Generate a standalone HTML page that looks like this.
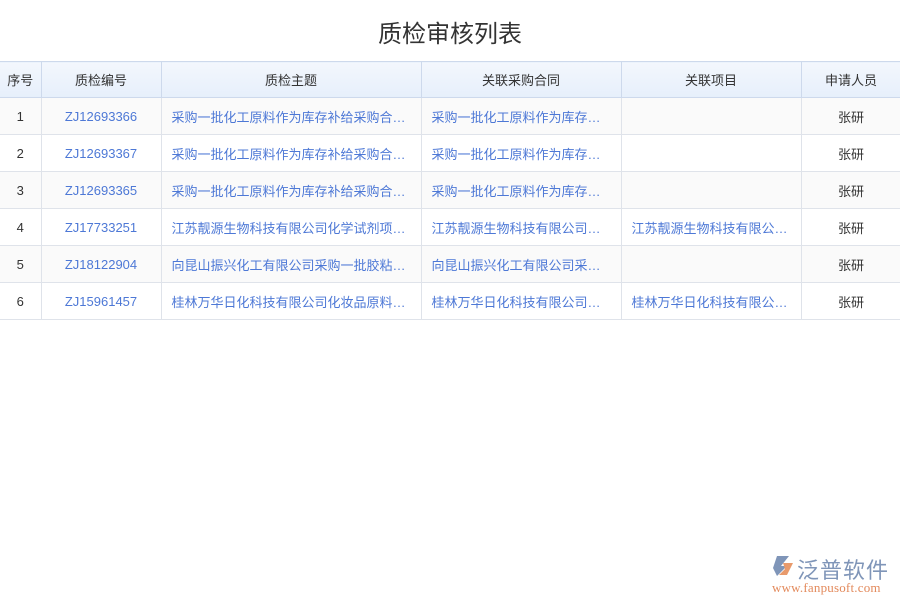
<!DOCTYPE html><html><head><meta charset="utf-8"><style>
body{margin:0;width:900px;height:600px;background:#fff;font-family:"Liberation Sans","Noto Sans CJK SC",sans-serif;position:relative;overflow:hidden}
h1{margin:0;position:absolute;top:14px;left:0;width:900px;text-align:center;font-size:24px;font-weight:normal;color:#333}
table{position:absolute;top:61px;left:0;border-collapse:collapse;table-layout:fixed;width:901px;font-size:13px}
td,th{height:36px;border:1px solid #dfe3ea;text-align:center;white-space:nowrap;overflow:hidden;padding:0 10px;color:#333}
th{font-weight:normal;background:linear-gradient(#f3f7fd,#e6effb);border-color:#cdd9ec;height:35px}
td.l{color:#4d78d6;text-align:left}
td.c{color:#4d78d6}
tr:nth-child(even) td{background:#fafafa}
td:first-child,th:first-child{padding:0;border-left:none}
</style></head><body>
<h1>质检审核列表</h1>
<table>
<colgroup><col style="width:41px"><col style="width:120px"><col style="width:260px"><col style="width:200px"><col style="width:180px"><col style="width:100px"></colgroup>
<tr><th>序号</th><th>质检编号</th><th>质检主题</th><th>关联采购合同</th><th>关联项目</th><th>申请人员</th></tr>
<tr><td>1</td><td class="c">ZJ12693366</td><td class="l">采购一批化工原料作为库存补给采购合…</td><td class="l">采购一批化工原料作为库存…</td><td class="l"></td><td>张研</td></tr>
<tr><td>2</td><td class="c">ZJ12693367</td><td class="l">采购一批化工原料作为库存补给采购合…</td><td class="l">采购一批化工原料作为库存…</td><td class="l"></td><td>张研</td></tr>
<tr><td>3</td><td class="c">ZJ12693365</td><td class="l">采购一批化工原料作为库存补给采购合…</td><td class="l">采购一批化工原料作为库存…</td><td class="l"></td><td>张研</td></tr>
<tr><td>4</td><td class="c">ZJ17733251</td><td class="l">江苏靓源生物科技有限公司化学试剂项…</td><td class="l">江苏靓源生物科技有限公司…</td><td class="l">江苏靓源生物科技有限公…</td><td>张研</td></tr>
<tr><td>5</td><td class="c">ZJ18122904</td><td class="l">向昆山振兴化工有限公司采购一批胶粘…</td><td class="l">向昆山振兴化工有限公司采…</td><td class="l"></td><td>张研</td></tr>
<tr><td>6</td><td class="c">ZJ15961457</td><td class="l">桂林万华日化科技有限公司化妆品原料…</td><td class="l">桂林万华日化科技有限公司…</td><td class="l">桂林万华日化科技有限公…</td><td>张研</td></tr>
</table>
<div style="position:absolute;left:771px;top:554px;width:24px;height:24px">
<svg width="24" height="24" viewBox="0 0 24 24"><path d="M6 2h12l-8 10h6l-10 10L2 14z" fill="#7f95b8"/><path d="M12 9h10l-6 12h-8l6-6z" fill="#e89a6c"/></svg></div>
<div style="position:absolute;left:797px;top:553px;font-size:22px;color:#7f95b8;letter-spacing:1px">泛普软件</div>
<div style="position:absolute;left:772px;top:580px;font-size:13px;color:#e38a5c;font-family:'Liberation Serif',serif;letter-spacing:0.2px">www.fanpusoft.com</div>
</body></html>
